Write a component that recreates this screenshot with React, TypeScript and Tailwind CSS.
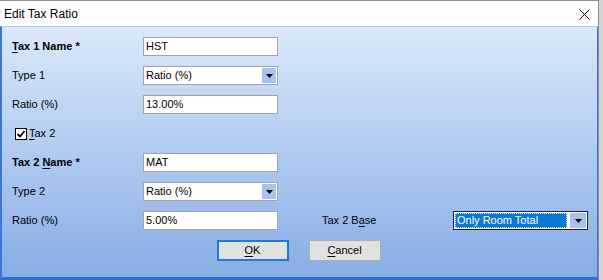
import React from "react";

function Arrow() {
  return (
    <svg width="7" height="4" viewBox="0 0 7 4">
      <polygon points="0,0 7,0 3.5,4" fill="#000" />
    </svg>
  );
}

function TextBox({ value }: { value: string }) {
  return (
    <div className="w-[135px] h-[19px] border border-[#a3a3a3] bg-white flex items-center pl-[2px] shrink-0">
      {value}
    </div>
  );
}

function Select({ value }: { value: string }) {
  return (
    <div className="w-[135px] h-[19px] border border-[#a3a3a3] bg-white flex items-stretch p-[1px] shrink-0">
      <div className="flex-1 flex items-center pl-[1px]">{value}</div>
      <div className="w-[14px] bg-[#a8c2ee] flex items-center justify-center">
        <Arrow />
      </div>
    </div>
  );
}

function Label({ children, bold }: { children: React.ReactNode; bold?: boolean }) {
  return <div className={"w-[131px] shrink-0 " + (bold ? "font-bold" : "")}>{children}</div>;
}

export default function App() {
  return (
    <div className="w-[603px] h-[280px] bg-[#d4d4d4] overflow-hidden">
      <div className="w-[599px] h-[280px] flex flex-col border-t border-r border-[#8c8c8c] bg-white font-['Liberation_Sans',Arial,sans-serif] text-[11px] leading-none text-black">
        <div className="h-[25px] shrink-0 flex items-center pl-[4px] pr-[8px]">
          <span className="flex-1 text-[12px]">Edit Tax Ratio</span>
          <svg width="11" height="11" viewBox="0 0 11 11" className="mt-[1px]">
            <path d="M0.5 0.5 L10.5 10.5 M10.5 0.5 L0.5 10.5" stroke="#000" strokeWidth="1" />
          </svg>
        </div>
        <div className="flex-1 flex flex-col border-t border-t-[#b6cef0] border-l-2 border-l-[#3b78d6] border-r border-r-[#3b78d6] border-b-[3px] border-b-[#2f6ed3] bg-gradient-to-b from-[#dae8fa] to-[#87ade5]">
          <div className="flex flex-col gap-[10px] pt-[10px] pl-[10px]">
            <div className="h-[19px] flex items-center">
              <Label bold>
                <span className="underline underline-offset-2">T</span>ax 1 Name *
              </Label>
              <TextBox value="HST" />
            </div>
            <div className="h-[19px] flex items-center">
              <Label>Type 1</Label>
              <Select value="Ratio (%)" />
            </div>
            <div className="h-[19px] flex items-center">
              <Label>Ratio (%)</Label>
              <TextBox value="13.00%" />
            </div>
            <div className="h-[19px] flex items-center pl-[3px]">
              <div className="w-[12px] h-[12px] border border-black bg-white flex items-center justify-center">
                <svg width="10" height="10" viewBox="0 0 10 10">
                  <path d="M1.5 5 L4 7.5 L8.5 2" stroke="#000" strokeWidth="1.8" fill="none" />
                </svg>
              </div>
              <span className="ml-[2px]">
                <span className="underline underline-offset-2">T</span>ax 2
              </span>
            </div>
            <div className="h-[19px] flex items-center">
              <Label bold>
                Tax 2 <span className="underline underline-offset-2">N</span>ame *
              </Label>
              <TextBox value="MAT" />
            </div>
            <div className="h-[19px] flex items-center">
              <Label>Type 2</Label>
              <Select value="Ratio (%)" />
            </div>
            <div className="h-[19px] flex items-center">
              <Label>Ratio (%)</Label>
              <TextBox value="5.00%" />
              <div className="w-[131px] shrink-0 ml-[44px]">
                Tax 2 B<span className="underline underline-offset-2">a</span>se
              </div>
              <div className="w-[135px] h-[19px] border border-[#1c1c5c] bg-white flex items-stretch p-[1px] shrink-0">
                <div className="flex-1 flex items-center bg-[#0a78d6] text-white border border-dotted border-[#f5f0a0] pl-[1px] mr-[3px]">
                  Only Room Total
                </div>
                <div className="w-[16px] bg-[#a8c2ee] flex items-center justify-center">
                  <Arrow />
                </div>
              </div>
            </div>
          </div>
          <div className="flex justify-center gap-[20px] mt-[10px] pr-[2px]">
            <div className="w-[72px] h-[21px] border-2 border-[#1f7ad6] bg-[#e1e1e1] flex items-center justify-center">
              <span>
                <span className="underline underline-offset-2">O</span>K
              </span>
            </div>
            <div className="w-[72px] h-[21px] border border-[#adadad] bg-[#e1e1e1] flex items-center justify-center">
              <span>
                <span className="underline underline-offset-2">C</span>ancel
              </span>
            </div>
          </div>
        </div>
      </div>
    </div>
  );
}
